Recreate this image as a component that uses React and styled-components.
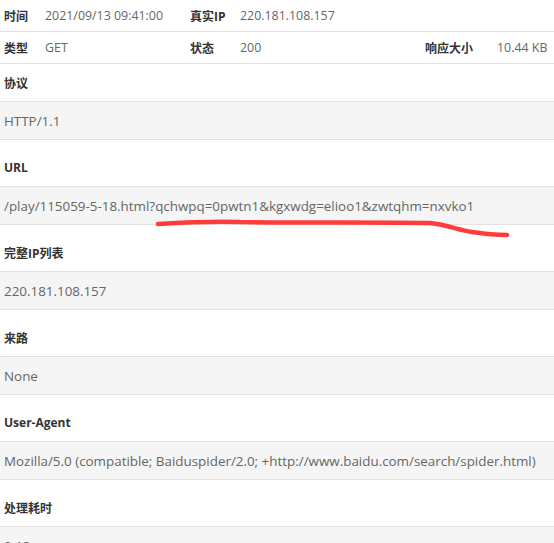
import React from "react";
import styled, {createGlobalStyle} from "styled-components";

const GlobalStyle = createGlobalStyle`
    body {
        margin: 0;
        background: #fff;
        font-family: "Open Sans", "Noto Sans CJK SC", sans-serif;
        color: #555;
    }
`

const Page = styled.div`
    position: relative;
    width: 554px;
`

const InfoRow = styled.div`
    display: grid;
    grid-template-columns: 41px 145px 50px 185px 72px 1fr;
    height: 31px;
    align-items: center;
    border-bottom: 1px solid #e2e2e2;
`

const Cell = styled.span`
    padding-left: 4px;
    font-size: ${props => props.label ? "12px" : "12.4px"};
    white-space: nowrap;
    font-weight: ${props => props.label ? 700 : 400};
    color: ${props => props.label ? "#333" : "#666"};
`

const Section = styled.section`
    padding-top: ${props => props.first ? "0" : "9px"};
`

const Label = styled.div`
    height: 37px;
    display: flex;
    align-items: center;
    padding-left: 4px;
    font-size: 12px;
    font-weight: 700;
    color: #333;
    border-bottom: 1px solid #e2e2e2;
`

const Value = styled.div`
    height: 37px;
    display: flex;
    align-items: center;
    padding-left: 4px;
    font-size: 13.4px;
    color: #666;
    background: #f5f5f5;
    border-bottom: 1px solid #e2e2e2;
    white-space: nowrap;
`

const Scribble = styled.svg`
    position: absolute;
    left: 0;
    top: 0;
    pointer-events: none;
`

const sections = [
    ["协议", "HTTP/1.1"],
    ["URL", "/play/115059-5-18.html?qchwpq=0pwtn1&kgxwdg=elioo1&zwtqhm=nxvko1"],
    ["完整IP列表", "220.181.108.157"],
    ["来路", "None"],
    ["User-Agent", "Mozilla/5.0 (compatible; Baiduspider/2.0; +http://www.baidu.com/search/spider.html)"],
    ["处理耗时", "0.12 s"],
]

export default function App() {
    return (
        <Page>
            <GlobalStyle/>
            <InfoRow>
                <Cell label>时间</Cell>
                <Cell>2021/09/13 09:41:00</Cell>
                <Cell label>真实IP</Cell>
                <Cell>220.181.108.157</Cell>
            </InfoRow>
            <InfoRow>
                <Cell label>类型</Cell>
                <Cell>GET</Cell>
                <Cell label>状态</Cell>
                <Cell>200</Cell>
                <Cell label>响应大小</Cell>
                <Cell>10.44 KB</Cell>
            </InfoRow>
            {sections.map(([label, value], i) => (
                <Section key={label} first={i === 0}>
                    <Label>{label}</Label>
                    <Value>{value}</Value>
                </Section>
            ))}
            <Scribble width="554" height="260">
                <path
                    d="M158 224 C190 222 215 221 240 222 C300 223 380 222 430 223 C448 225 458 230 472 232 C485 234 495 235 507 235"
                    fill="none" stroke="#ff3b3b" strokeWidth="4.5" strokeLinecap="round"
                />
            </Scribble>
        </Page>
    )
}
